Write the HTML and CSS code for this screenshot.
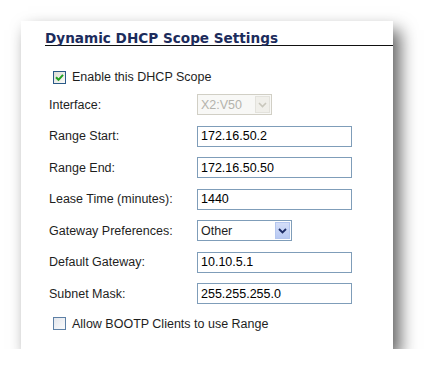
FILE: index.html
```html
<!DOCTYPE html>
<html lang="en">
  <head>
    <title>Dynamic DHCP Scope Settings</title>
    <link rel="stylesheet" href="styles.css">
  </head>
  <body>
    <div class="panel">
      <h2 class="title">Dynamic DHCP Scope Settings</h2>
      <div class="form">
        <label class="check">
          <span class="box">
            <svg width="9" height="9" viewBox="0 0 9 9"><path d="M1 4.2 L3.5 6.8 L8 1.8" fill="none" stroke="#21a121" stroke-width="2"/></svg>
          </span>
          Enable this DHCP Scope
        </label>
        <div class="row">
          <span class="lbl">Interface:</span>
          <div class="select disabled iface">
            <span class="value">X2:V50</span>
            <span class="arrow">
              <svg width="9" height="6" viewBox="0 0 9 6"><path d="M1 1 L4.5 4.5 L8 1" fill="none" stroke="#c9c7bc" stroke-width="1.6"/></svg>
            </span>
          </div>
        </div>
        <div class="row">
          <span class="lbl">Range Start:</span>
          <input class="field" type="text" value="172.16.50.2">
        </div>
        <div class="row">
          <span class="lbl">Range End:</span>
          <input class="field" type="text" value="172.16.50.50">
        </div>
        <div class="row">
          <span class="lbl">Lease Time (minutes):</span>
          <input class="field" type="text" value="1440">
        </div>
        <div class="row">
          <span class="lbl">Gateway Preferences:</span>
          <div class="select gateway">
            <span class="value">Other</span>
            <span class="arrow">
              <svg width="9" height="6" viewBox="0 0 9 6"><path d="M1 1 L4.5 4.5 L8 1" fill="none" stroke="#1d2c66" stroke-width="1.8"/></svg>
            </span>
          </div>
        </div>
        <div class="row">
          <span class="lbl">Default Gateway:</span>
          <input class="field" type="text" value="10.10.5.1">
        </div>
        <div class="row">
          <span class="lbl">Subnet Mask:</span>
          <input class="field" type="text" value="255.255.255.0">
        </div>
        <label class="check bootp">
          <span class="box off"></span>
          Allow BOOTP Clients to use Range
        </label>
      </div>
    </div>
  </body>
</html>
```

FILE: styles.css
```css
* {
  box-sizing: border-box;
  margin: 0;
  padding: 0;
}
body {
  background: #fff;
  font-family: "Liberation Sans", Arial, sans-serif;
  font-size: 12.5px;
  color: #1e1e1e;
}
.panel {
  margin: 21px 0 0 21px;
  width: 372px;
  height: 328px;
  background: #fff;
  padding-top: 10px;
  box-shadow: 7px 9px 16px rgba(0, 0, 0, 0.62);
}
.title {
  margin-left: 24px;
  font-family: "DejaVu Sans", Verdana, sans-serif;
  font-size: 13.6px;
  line-height: 14px;
  font-weight: bold;
  color: #1c2c5c;
  border-bottom: 1px solid #111;
}
.form {
  display: flex;
  flex-direction: column;
  gap: 10.5px;
  padding-left: 28px;
  margin-top: 24.5px;
}
.row {
  display: flex;
  align-items: center;
  height: 21px;
}
.lbl {
  width: 148px;
}
.field {
  width: 155px;
  height: 21px;
  border: 1px solid #7f9db9;
  padding-left: 3px;
  font-family: "Liberation Sans", Arial, sans-serif;
  font-size: 12.5px;
  color: #000;
  outline: none;
}
.check {
  display: flex;
  align-items: center;
  gap: 6px;
  margin-left: 4px;
  height: 13px;
}
.bootp {
  margin-top: 2.5px;
}
.box {
  width: 13px;
  height: 13px;
  border: 1px solid #2b5a88;
  background: linear-gradient(135deg, #dcdcd5, #fbfbf9);
  display: flex;
  align-items: center;
  justify-content: center;
}
.box.off {
  border-color: #5d80a6;
  background: linear-gradient(135deg, #e3e6ec, #fafbfc);
}
.select {
  display: flex;
  align-items: center;
  justify-content: space-between;
  height: 21px;
  border: 1px solid #7f9db9;
  padding: 1px 1px 1px 3px;
}
.select .value {
  font-size: 12.5px;
}
.arrow {
  width: 15px;
  height: 17px;
  display: flex;
  align-items: center;
  justify-content: center;
  background: linear-gradient(#d4def8, #b8c9f3);
  border: 1px solid #b4c6ef;
}
.iface {
  width: 75px;
  border-color: #d1cfc5;
  background: #f8f8f6;
}
.iface .value {
  color: #b4b3ac;
}
.iface .arrow {
  background: #f0efea;
  border-color: #e3e2dc;
}
.gateway {
  width: 95px;
  padding-left: 3px;
}
```
